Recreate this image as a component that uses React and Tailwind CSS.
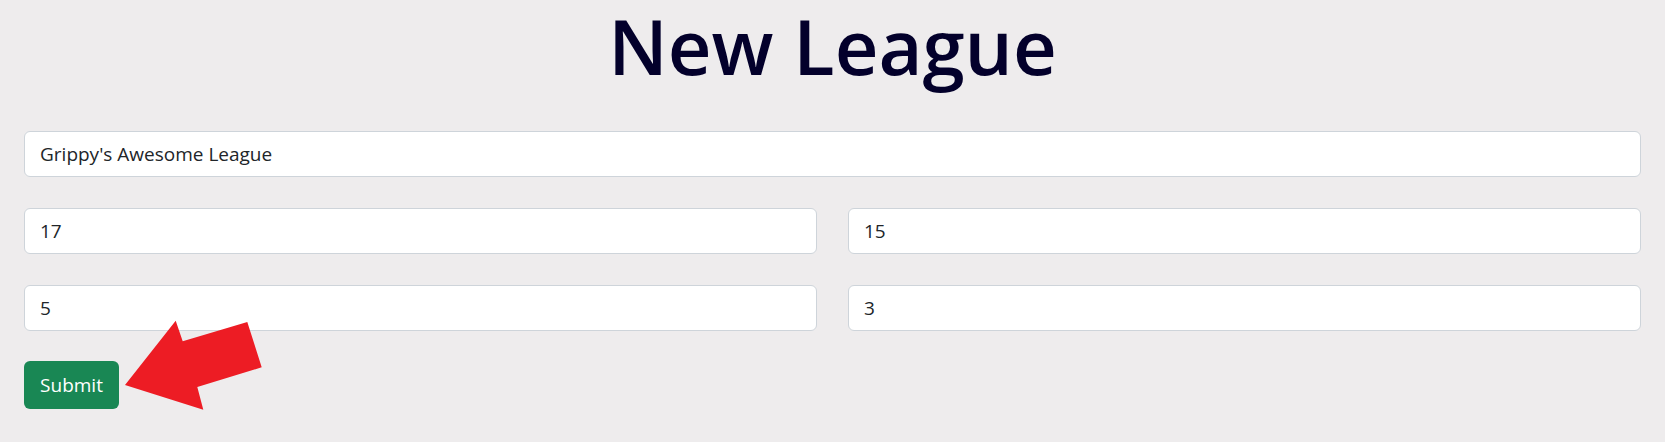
import React, { useState } from 'react';

const inputClass =
    "w-full h-[46px] px-[15px] bg-white border border-[#ced4da] rounded-[6px] text-[19px] text-[#212529] outline-none";

const App = () => {
    const [name, setName] = useState("Grippy's Awesome League");
    const [a, setA] = useState('17');
    const [b, setB] = useState('15');
    const [c, setC] = useState('5');
    const [d, setD] = useState('3');

    return (
        <div className="min-h-screen w-full bg-[#eeeced] px-6 pt-px font-['Open_Sans','Noto_Sans',sans-serif]">
            <h1 className="text-center text-[76px] leading-[90px] font-semibold text-[#03002b]">New League</h1>
            <form className="mt-10 flex flex-col gap-[31px]" onSubmit={(e) => e.preventDefault()}>
                <input className={inputClass} value={name} onChange={(e) => setName(e.target.value)} />
                <div className="grid grid-cols-2 gap-[31px]">
                    <input className={inputClass} value={a} onChange={(e) => setA(e.target.value)} />
                    <input className={inputClass} value={b} onChange={(e) => setB(e.target.value)} />
                </div>
                <div className="grid grid-cols-2 gap-[31px]">
                    <input className={inputClass} value={c} onChange={(e) => setC(e.target.value)} />
                    <input className={inputClass} value={d} onChange={(e) => setD(e.target.value)} />
                </div>
                <div className="relative -mt-px">
                    <button type="submit" className="w-[95px] h-[48px] bg-[#198754] text-white text-[19px] rounded-[6px]">
                        Submit
                    </button>
                    {/* red annotation arrow */}
                    <svg className="absolute left-[-24px] top-[-41px] pointer-events-none" width="270" height="100" viewBox="0 322 270 100">
                        <polygon
                            fill="#ed1c24"
                            points="125,387 175.7,322.7 182.7,343.3 247.3,324 261.7,369.3 197.3,389 203.3,411.7"
                        />
                    </svg>
                </div>
            </form>
        </div>
    );
};

export default App;
